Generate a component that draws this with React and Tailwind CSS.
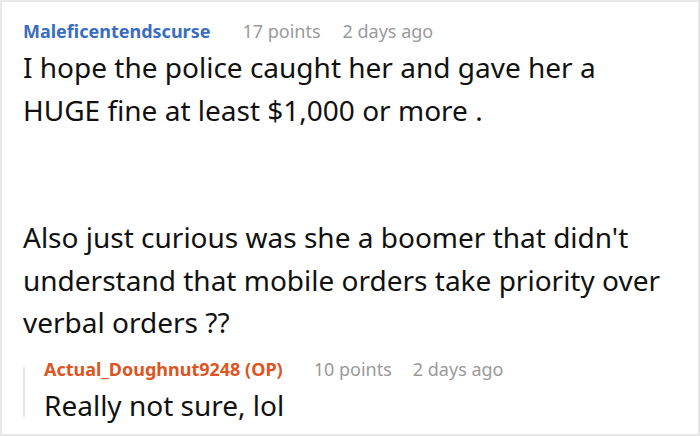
export default function App() {
  return (
    <div className="w-[700px] h-[436px] bg-white border-2 border-[#e8e8e8] overflow-hidden font-['Noto_Sans',sans-serif] text-[#111]">
      <div className="pl-[21px] pr-[28px] pt-[17px]">
        {/* Comment header */}
        <div className="flex items-baseline text-[18px] leading-[24px]">
          <span className="font-bold text-[#3a6cc0]">Maleficentendscurse</span>
          <span className="ml-[32px] text-[#9a9a9a]">17 points</span>
          <span className="ml-[22px] text-[#9a9a9a]">2 days ago</span>
        </div>

        {/* Comment body */}
        <div className="mt-[3px] text-[28px] leading-[42.5px]">
          <p>I hope the police caught her and gave her a HUGE fine at least $1,000 or more .</p>
          <p className="mt-[85px]">
            Also just curious was she a boomer that didn&apos;t understand that mobile orders take priority over verbal orders ??
          </p>
        </div>

        {/* Reply */}
        <div className="mt-[13px] flex">
          <div className="w-[2px] mt-[10px] h-[50px] bg-[#e6e6e6]" />
          <div className="pl-[19px]">
            <div className="flex items-baseline text-[18px] leading-[24px]">
              <span className="font-bold text-[#dd5522]">Actual_Doughnut9248 (OP)</span>
              <span className="ml-[31px] text-[#9a9a9a]">10 points</span>
              <span className="ml-[21px] text-[#9a9a9a]">2 days ago</span>
            </div>
            <p className="mt-[10px] text-[28px] leading-[28px]">Really not sure, lol</p>
          </div>
        </div>
      </div>
    </div>
  );
}
